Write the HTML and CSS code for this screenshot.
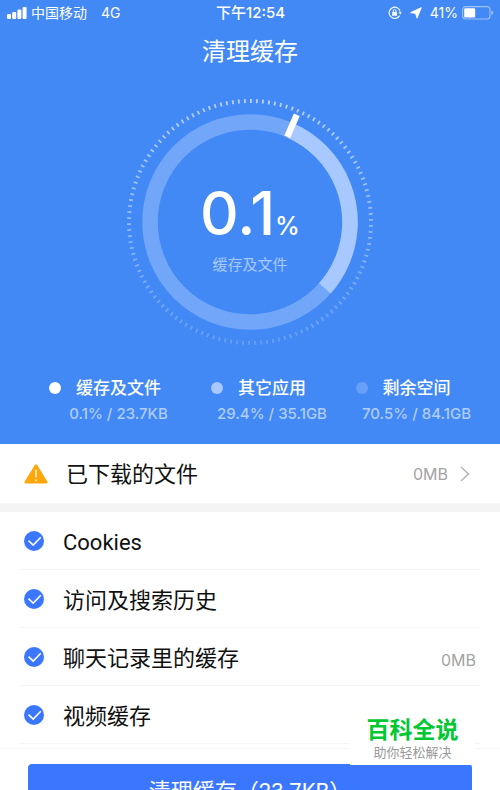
FILE: index.html
```html
<!DOCTYPE html>
<html lang="zh-CN">

<head>
    <meta charset="utf-8">
    <meta name="viewport" content="width=device-width, initial-scale=1">
    <title>清理缓存</title>
    <link rel="stylesheet" href="styles.css">
</head>

<body>
    <div class="app">
        <header class="summary">
            <div class="status-bar">
                <div class="status-left">
                    <svg class="signal" width="20" height="13" viewBox="0 0 20 13" fill="#fff">
                        <rect x="0" y="7" width="4" height="5" rx="1.2" />
                        <rect x="5.2" y="5" width="4" height="7" rx="1.2" />
                        <rect x="10.4" y="2.5" width="4" height="9.5" rx="1.2" />
                        <rect x="15.6" y="0" width="4" height="12" rx="1.2" />
                    </svg>
                    <span>中国移动</span>
                    <span class="network">4G</span>
                </div>
                <div class="status-time">下午12:54</div>
                <div class="status-right">
                    <svg width="14" height="14" viewBox="0 0 14 14" fill="none" stroke="#fff">
                        <path d="M11.6 9.6A5.6 5.6 0 1 1 12.2 5.5" stroke-width="1.1" />
                        <path d="M10.6 6.2h3.2l-1.6 2.2z" fill="#fff" stroke="none" />
                        <path d="M5.2 6.5V5a1.4 1.4 0 0 1 2.8 0v1.5" stroke-width="1" />
                        <rect x="4.2" y="6" width="4.8" height="3.8" rx="0.6" fill="#fff" stroke="none" />
                    </svg>
                    <svg class="location" width="12" height="12" viewBox="0 0 12 12" fill="#fff" stroke="#fff" stroke-width="0.8" stroke-linejoin="round">
                        <path d="M11.4 0.6L7 11.2L5.6 6.6L0.6 5.6z" />
                    </svg>
                    <span>41%</span>
                    <svg width="32" height="14" viewBox="0 0 32 14">
                        <rect x="0.6" y="0.6" width="27.4" height="12.4" rx="3" fill="none" stroke="#9cc1fb" stroke-width="1.1" />
                        <rect x="2.2" y="2.2" width="11" height="9.2" rx="1.2" fill="#fff" />
                        <path d="M29.3 4.6q2 .6 2 2.2t-2 2.2z" fill="#9cc1fb" />
                    </svg>
                </div>
            </div>

            <h1>清理缓存</h1>

            <div class="gauge">
                <svg width="246" height="246" viewBox="-123 -123 246 246" fill="none">
                    <defs>
                        <linearGradient id="fade" gradientUnits="userSpaceOnUse" x1="-123" y1="0" x2="123" y2="0">
                            <stop offset="0" stop-color="#fff" stop-opacity="0.62" />
                            <stop offset="1" stop-color="#fff" stop-opacity="0.18" />
                        </linearGradient>
                    </defs>
                    <!-- tick marks, the gradient is turned with the circle -->
                    <circle r="121" stroke="url(#fade)" stroke-width="4" pathLength="504" stroke-dasharray="1.2 2.8" transform="rotate(90)" />
                    <!-- ring: free space, other apps, cache -->
                    <circle r="100" stroke="#71a6f9" stroke-width="15.5" />
                    <circle r="100" stroke="#a8c9ff" stroke-width="15.5" pathLength="360" stroke-dasharray="108 252" transform="rotate(-66.4)" />
                    <path d="M0-93V-117" stroke="#fff" stroke-width="6.4" transform="rotate(23.6)" />
                </svg>
                <div class="gauge-text">
                    <div class="percent">0.1<span class="unit">%</span></div>
                    <div class="caption">缓存及文件</div>
                </div>
            </div>

            <ul class="legend">
                <li class="cache">
                    <span class="name">缓存及文件</span>
                    <span class="value">0.1% / 23.7KB</span>
                </li>
                <li class="apps">
                    <span class="name">其它应用</span>
                    <span class="value">29.4% / 35.1GB</span>
                </li>
                <li class="free">
                    <span class="name">剩余空间</span>
                    <span class="value">70.5% / 84.1GB</span>
                </li>
            </ul>
        </header>

        <a class="downloads" href="#downloads">
            <svg width="24" height="20" viewBox="0 0 24 20">
                <path d="M10.7 1.2Q12-.6 13.3 1.2L23.3 17.4Q24 19.4 22.2 19.5H1.8Q0 19.4.7 17.4z" fill="#ffa60a" />
                <path d="M12 5.5v8M12 15.6v1.6" stroke="#fff" stroke-width="1.3" />
            </svg>
            <span class="title">已下载的文件</span>
            <span class="size">0MB</span>
            <svg class="chevron" width="10" height="16" viewBox="0 0 10 16" fill="none" stroke="#b5b5b5" stroke-width="1.5">
                <path d="M1 1l7.5 7L1 15" />
            </svg>
        </a>

        <main class="options">
            <label class="option">
                <input type="checkbox" checked>
                <span class="title">Cookies</span>
            </label>
            <label class="option">
                <input type="checkbox" checked>
                <span class="title">访问及搜索历史</span>
            </label>
            <label class="option">
                <input type="checkbox" checked>
                <span class="title">聊天记录里的缓存</span>
                <span class="size">0MB</span>
            </label>
            <label class="option">
                <input type="checkbox" checked>
                <span class="title">视频缓存</span>
            </label>
        </main>

        <footer class="actions">
            <button class="clean" type="button">清理缓存（23.7KB）</button>
        </footer>

        <div class="badge">
            <div class="badge-name">百科全说</div>
            <div class="badge-text">助你轻松解决</div>
        </div>
    </div>
</body>

</html>
```
FILE: styles.css
```css
* {
    box-sizing: border-box;
}

body {
    margin: 0;
    background: #fff;
    color: #111;
    font-family: Inter, "Noto Sans CJK SC", sans-serif;
}

.app {
    position: relative;
    height: 100vh;
    overflow: hidden;
}

/* blue header */
.summary {
    padding-bottom: 20px;
    background: #4289f5;
    color: #fff;
}

.status-bar {
    display: grid;
    grid-template-columns: 1fr auto 1fr;
    align-items: center;
    height: 26px;
    padding: 0 6px 0 7px;
    font-size: 14px;
    line-height: 20px;
}

.status-left,
.status-right {
    display: flex;
    align-items: center;
    gap: 4px;
}

.network {
    margin-left: 10px;
}

.status-time {
    font-size: 15px;
    font-weight: 500;
}

.status-right {
    justify-content: flex-end;
}

.location {
    margin: 0 4px;
}

h1 {
    margin: 8px 0 0;
    font-size: 24px;
    font-weight: 400;
    line-height: 36px;
    text-align: center;
}

.gauge {
    display: grid;
    place-items: center;
    margin-top: 29px;
}

.gauge > * {
    grid-area: 1 / 1;
}

.gauge svg {
    display: block;
}

.gauge-text {
    padding-top: 13px;
    text-align: center;
}

.percent {
    font-size: 60px;
    font-weight: 500;
    line-height: 60px;
}

.unit {
    font-size: 25px;
    line-height: 30px;
}

.caption {
    margin-top: 12px;
    color: #a8c9ff;
    font-size: 15px;
    line-height: 20px;
}

.legend {
    display: grid;
    grid-template-columns: 157fr 150fr 139fr;
    margin: 0;
    padding: 31px 14px 0 40px;
    list-style: none;
}

.legend li {
    display: flex;
    flex-direction: column;
    align-items: center;
    gap: 4px;
}

.name {
    position: relative;
    font-size: 17px;
    font-weight: 500;
    line-height: 24px;
}

.name::before {
    content: "";
    position: absolute;
    top: 6px;
    left: -27px;
    width: 12px;
    height: 12px;
    border-radius: 50%;
    background: #fff;
}

.apps .name::before {
    background: #a8c9ff;
}

.free .name::before {
    background: #68a0f9;
}

.value {
    color: #b0cdfc;
    font-size: 15px;
    font-weight: 500;
    line-height: 20px;
    white-space: nowrap;
}

/* list rows */
.downloads {
    display: flex;
    align-items: center;
    height: 68px;
    padding: 0 30px 0 24px;
    border-bottom: 9px solid #f4f4f4;
    color: inherit;
    text-decoration: none;
}

.downloads .title {
    margin-left: 18px;
}

.title {
    flex: 1;
    padding-top: 2px;
    font-family: Roboto, "Noto Sans CJK SC", sans-serif;
    font-size: 22px;
    line-height: 32px;
}

.size {
    color: #a3a3a3;
    font-size: 16px;
    line-height: 24px;
}

.option .title {
    padding-top: 4px;
}

.option .size {
    padding-top: 6px;
}

.chevron {
    margin-left: 12px;
}

.options {
    padding: 0 20px;
}

.option {
    display: flex;
    align-items: center;
    height: 58px;
    padding: 0 4px;
    border-bottom: 1px solid #f4f4f4;
}

.option input {
    appearance: none;
    width: 20px;
    height: 20px;
    margin: 0 19px 0 0;
    border-radius: 50%;
    background: #e0e0e0;
}

.option input:checked {
    background: #3b76ff url("data:image/svg+xml,%3Csvg xmlns='http://www.w3.org/2000/svg' viewBox='0 0 20 20' fill='none' stroke='white' stroke-width='1.6'%3E%3Cpath d='M4.5 9.6l4.7 4.5 7.6-7.8'/%3E%3C/svg%3E") center / 20px 20px no-repeat;
}

.actions {
    margin-top: 4px;
    padding: 15px 28px;
    border-top: 1px solid #f4f4f4;
}

.clean {
    width: 100%;
    height: 50px;
    padding: 0;
    border: 0;
    border-radius: 4px;
    background: #3b76ff;
    color: #fff;
    font-family: Roboto, "Noto Sans CJK SC", sans-serif;
    font-size: 22px;
}

/* site badge over the bottom corner */
.badge {
    position: absolute;
    right: 25px;
    bottom: 25px;
    width: 125px;
    padding: 4px 0;
    background: #fff;
    text-align: center;
}

.badge-name {
    color: #00c832;
    font-size: 23px;
    font-weight: 700;
    line-height: 26px;
}

.badge-text {
    color: #999;
    font-size: 13px;
    line-height: 18px;
}
```
